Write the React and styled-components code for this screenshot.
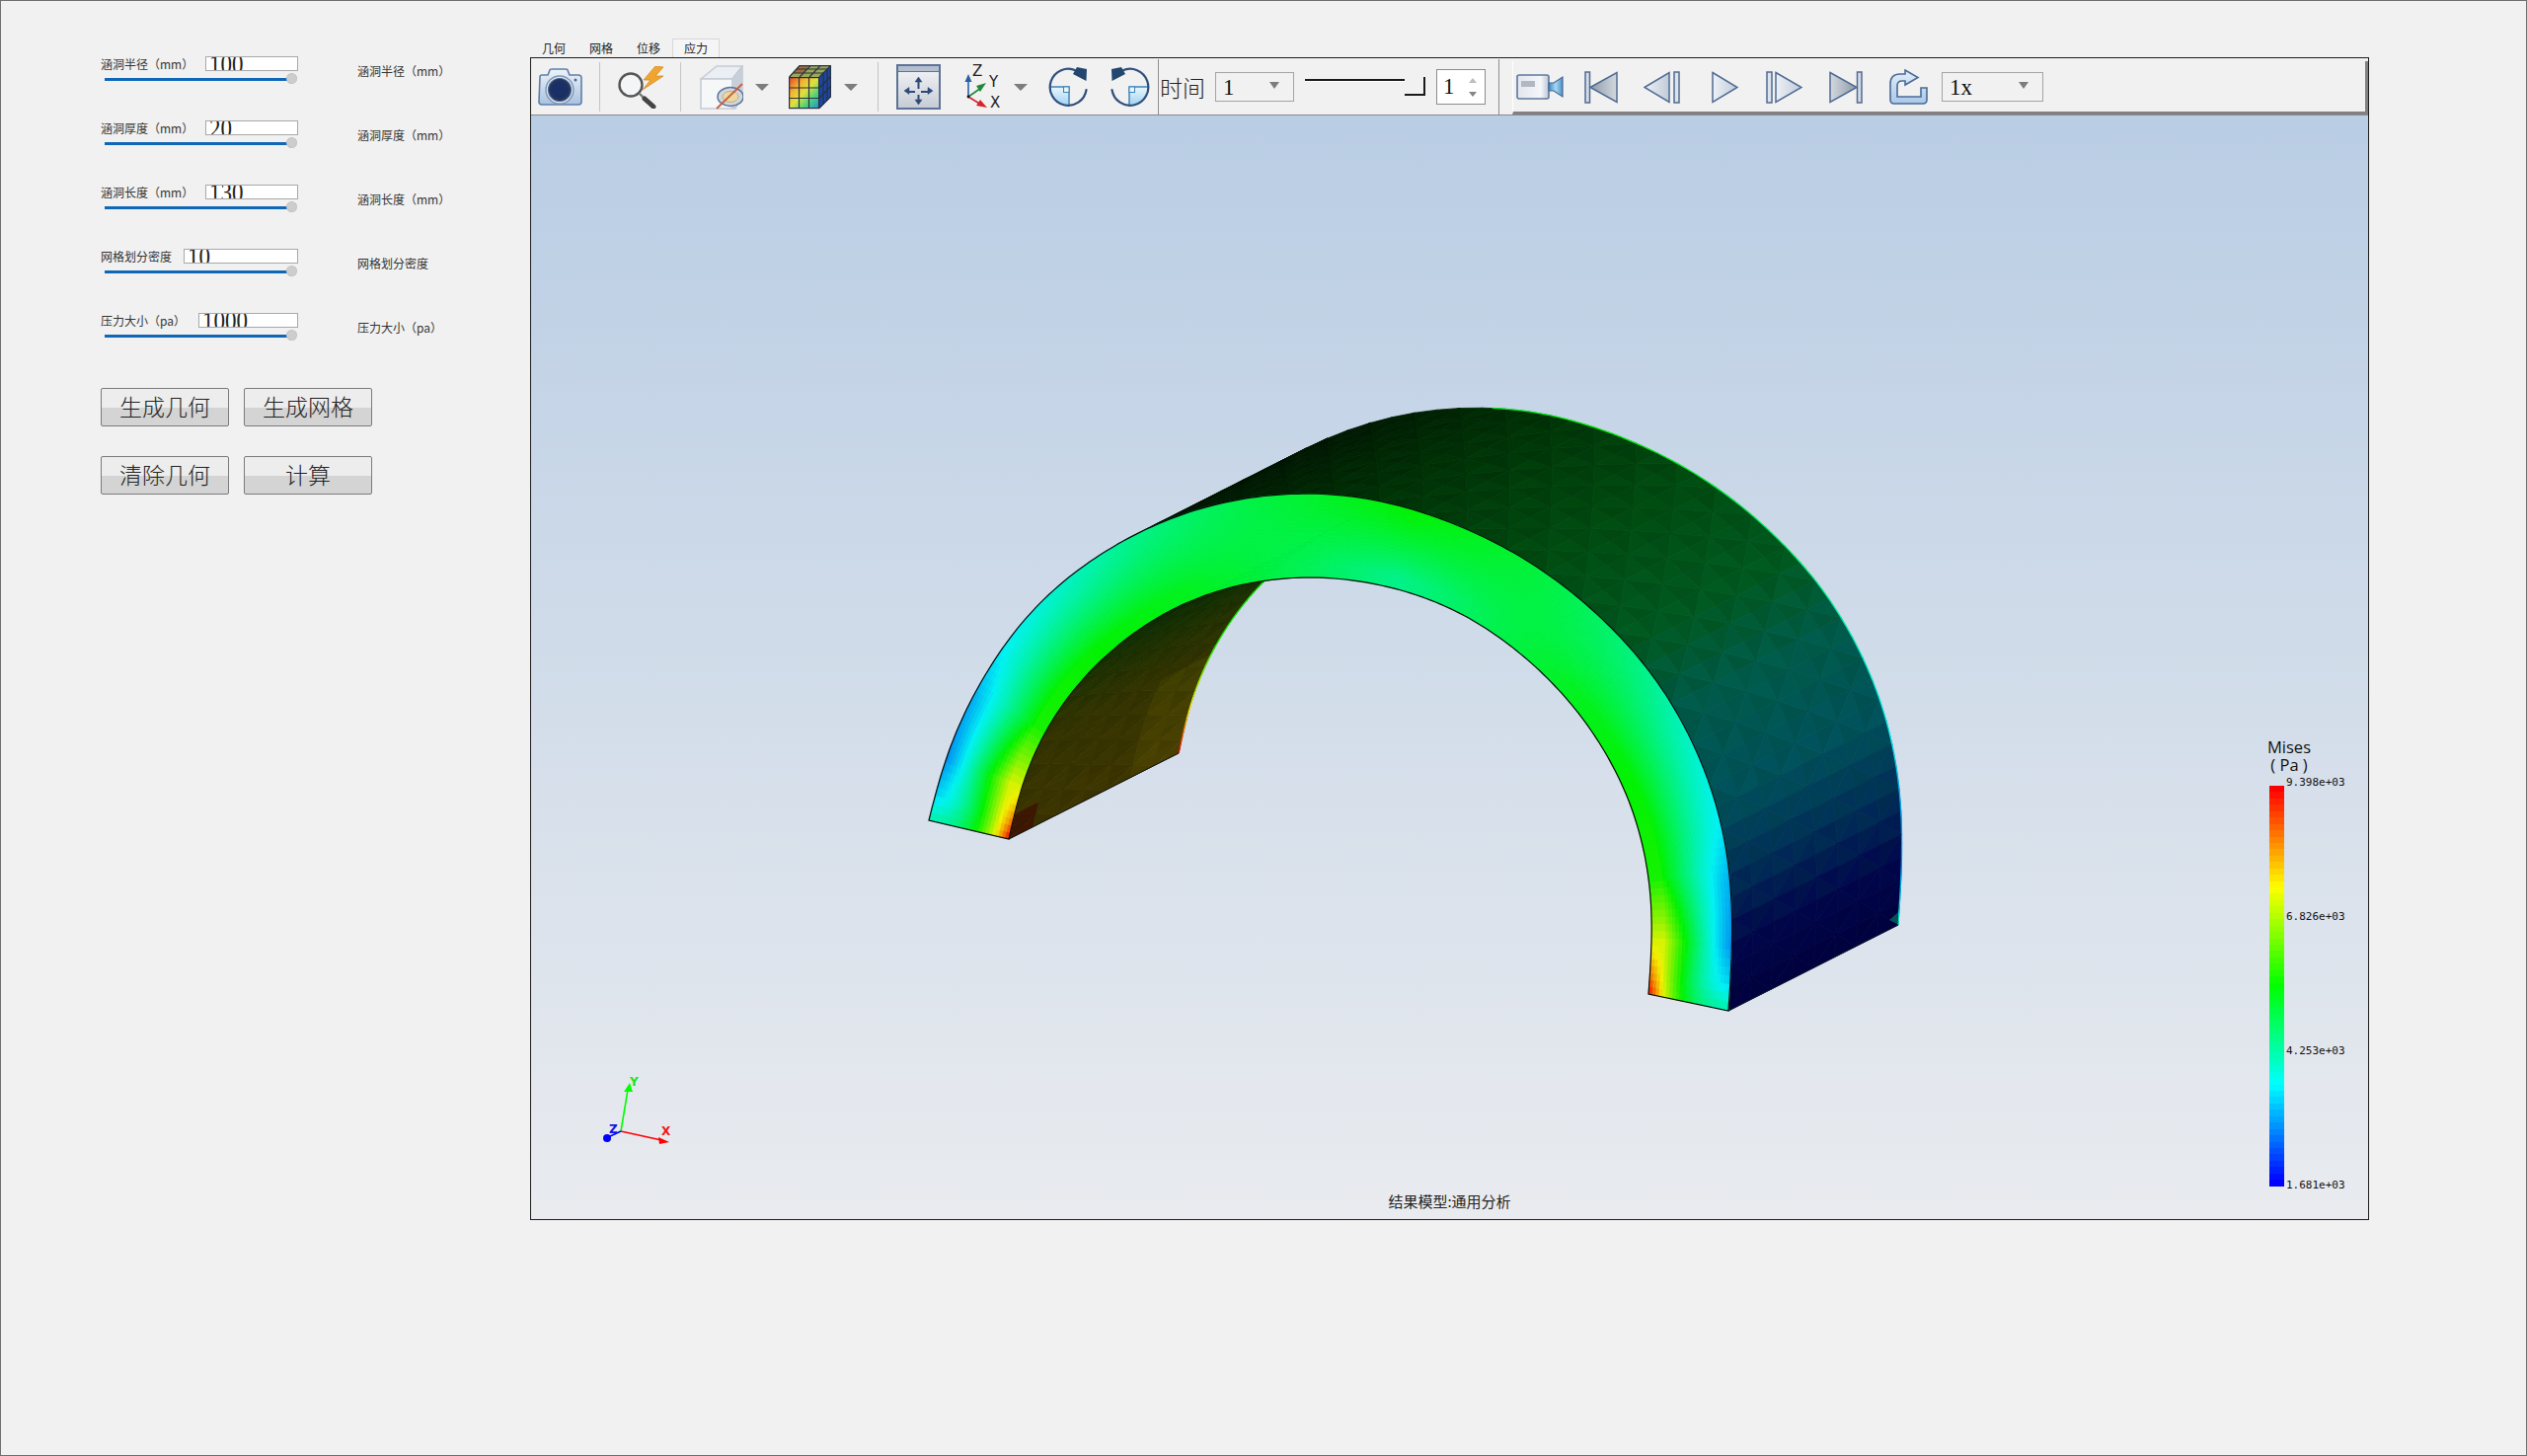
import React from 'react';
import styled, { createGlobalStyle } from 'styled-components';

/* ---------- colour helpers for the result plot ---------- */

const lerp = (a, b, k) => a + (b - a) * k;
const clamp = (v, lo = 0, hi = 1) => Math.min(hi, Math.max(lo, v));

const interp = (keys, x) => {
  if (x <= keys[0][0]) return keys[0][1];
  for (let i = 1; i < keys.length; i++) {
    if (x <= keys[i][0]) {
      const k = (x - keys[i - 1][0]) / (keys[i][0] - keys[i - 1][0]);
      return lerp(keys[i - 1][1], keys[i][1], k);
    }
  }
  return keys[keys.length - 1][1];
};

const rainbow = [
  [0, 0, 255],
  [0, 255, 255],
  [0, 255, 0],
  [255, 255, 0],
  [255, 0, 0],
];

const stressRgb = (v) => {
  const p = clamp(v) * 4;
  const i = Math.min(3, Math.floor(p));
  return rainbow[i].map((c, n) => lerp(c, rainbow[i + 1][n], p - i));
};

const css = (rgb, gain = 1) =>
  `rgb(${rgb.map((c) => Math.round(clamp(c * gain, 0, 255))).join(',')})`;

const rampRgb = (keys, x) => {
  if (x <= keys[0][0]) return keys[0][1];
  for (let i = 1; i < keys.length; i++) {
    if (x <= keys[i][0]) {
      const k = (x - keys[i - 1][0]) / (keys[i][0] - keys[i - 1][0]);
      return keys[i - 1][1].map((c, n) => lerp(c, keys[i][1][n], k));
    }
  }
  return keys[keys.length - 1][1];
};

/* ---------- arch geometry, measured on the reference ---------- */

const OUTER_PTS = [
  [941, 831], [948, 795], [962, 752], [1002, 677], [1053, 610], [1113, 565], [1197, 522], [1273, 505],
  [1320, 502], [1355, 502], [1400, 509], [1471, 533], [1557, 576], [1650, 657], [1707, 739],
  [1743, 829], [1754, 902], [1755, 963], [1751, 1024],
];
const INNER_PTS = [
  [1022, 850], [1030, 810], [1047, 763], [1087, 700], [1140, 650], [1207, 610], [1273, 592],
  [1337, 587], [1400, 596], [1440, 607], [1496, 633], [1579, 702], [1643, 796], [1668, 878],
  [1674, 931], [1670, 1007],
];
const EXTRUDE = [172, -87];
const ARCH_CENTER = [1350, 800];

const spline = (pts) => {
  const out = [];
  for (let i = 0; i < pts.length - 1; i++) {
    const p0 = pts[Math.max(0, i - 1)];
    const p1 = pts[i];
    const p2 = pts[i + 1];
    const p3 = pts[Math.min(pts.length - 1, i + 2)];
    for (let s = 0; s < 12; s++) {
      const t = s / 12;
      const f = (a, b, c, d) =>
        0.5 * (2 * b + (c - a) * t + (2 * a - 5 * b + 4 * c - d) * t * t + (3 * b - a - 3 * c + d) * t * t * t);
      out.push([f(p0[0], p1[0], p2[0], p3[0]), f(p0[1], p1[1], p2[1], p3[1])]);
    }
  }
  out.push(pts[pts.length - 1]);
  return out;
};

const lengths = (pts) => {
  const len = [0];
  for (let i = 1; i < pts.length; i++) {
    len.push(len[i - 1] + Math.hypot(pts[i][0] - pts[i - 1][0], pts[i][1] - pts[i - 1][1]));
  }
  return len;
};

const sampler = (pts) => {
  const len = lengths(pts);
  const total = len[len.length - 1];
  return (t) => {
    const target = clamp(t) * total;
    let i = 1;
    while (i < len.length - 1 && len[i] < target) i++;
    const k = (target - len[i - 1]) / Math.max(0.001, len[i] - len[i - 1]);
    return [lerp(pts[i - 1][0], pts[i][0], k), lerp(pts[i - 1][1], pts[i][1], k)];
  };
};

// the measured points are a bit lumpy, so relax them into one fair curve
const makeCurve = (pts) => {
  const rough = sampler(spline(pts));
  let line = Array.from({ length: 301 }, (_, i) => rough(i / 300));
  for (let pass = 0; pass < 300; pass++) {
    line = line.map((p, i) => {
      if (i === 0 || i === line.length - 1) return p;
      return [
        0.25 * line[i - 1][0] + 0.5 * p[0] + 0.25 * line[i + 1][0],
        0.25 * line[i - 1][1] + 0.5 * p[1] + 0.25 * line[i + 1][1],
      ];
    });
  }
  // relaxing pulls the curve inwards, push it back out
  line = line.map((p, i) => {
    const t = i / 300;
    const dx = p[0] - ARCH_CENTER[0];
    const dy = p[1] - ARCH_CENTER[1];
    const r = Math.hypot(dx, dy);
    const push = 5 * Math.min(1, 5 * t * (1 - t));
    return [p[0] + (dx / r) * push, p[1] + (dy / r) * push];
  });
  return sampler(line);
};

const outerAt = makeCurve(OUTER_PTS);
const innerAt = makeCurve(INNER_PTS);
const shift = (p, u) => [p[0] + EXTRUDE[0] * u, p[1] + EXTRUDE[1] * u];

const OUT_KEYS = [[0, 0.33], [0.02, 0.22], [0.05, 0.15], [0.1, 0.18], [0.14, 0.24], [0.22, 0.3], [0.28, 0.36], [0.36, 0.42], [0.5, 0.5]];
const IN_KEYS = [[0, 1], [0.015, 0.9], [0.04, 0.76], [0.07, 0.65], [0.11, 0.52], [0.2, 0.5], [0.3, 0.47], [0.4, 0.42], [0.5, 0.36]];

const frontValue = (t, s) => {
  const d = Math.min(t, 1 - t);
  const a = interp(OUT_KEYS, d);
  const b = interp(IN_KEYS, d);
  const f = lerp(Math.pow(s, 2.5), Math.pow(Math.min(1, s / 0.85), 1.3), clamp(d / 0.05));
  return a + (b - a) * f;
};

const OUTER_RAMP = [
  [0.26, [0, 16, 0]], [0.36, [0, 28, 2]], [0.445, [0, 44, 4]], [0.6, [0, 74, 16]], [0.7, [0, 88, 32]],
  [0.76, [0, 90, 72]], [0.84, [0, 80, 90]], [0.9, [0, 44, 84]], [0.95, [0, 6, 74]], [1, [0, 0, 60]],
];
const INNER_RAMP = [
  [0, [60, 52, 0]], [0.1, [50, 50, 0]], [0.2, [20, 46, 0]], [0.3, [8, 34, 4]],
];

const quad = (a, b, c, d) => `M${a[0].toFixed(1)} ${a[1].toFixed(1)}L${b[0].toFixed(1)} ${b[1].toFixed(1)}L${c[0].toFixed(1)} ${c[1].toFixed(1)}L${d[0].toFixed(1)} ${d[1].toFixed(1)}Z`;
const tri = (a, b, c) => `M${a[0].toFixed(1)} ${a[1].toFixed(1)}L${b[0].toFixed(1)} ${b[1].toFixed(1)}L${c[0].toFixed(1)} ${c[1].toFixed(1)}Z`;

const noise = (i, j, k) => {
  const x = Math.sin(i * 12.9898 + j * 78.233 + k * 37.719) * 43758.5453;
  return x - Math.floor(x);
};

const buildFront = () => {
  const N = 150;
  const M = 24;
  const list = [];
  for (let i = 0; i < N; i++) {
    const t0 = i / N;
    const t1 = (i + 1) / N;
    const o0 = outerAt(t0);
    const o1 = outerAt(t1);
    const n0 = innerAt(t0);
    const n1 = innerAt(t1);
    for (let j = 0; j < M; j++) {
      const s0 = j / M;
      const s1 = (j + 1) / M;
      const p = (o, n, s) => [lerp(o[0], n[0], s), lerp(o[1], n[1], s)];
      const c = css(stressRgb(frontValue((t0 + t1) / 2, (s0 + s1) / 2)), 0.95);
      list.push({ d: quad(p(o0, n0, s0), p(o1, n1, s0), p(o1, n1, s1), p(o0, n0, s1)), c });
    }
  }
  return list;
};

const buildOuterSkin = () => {
  const start = 0.265;
  const N = 42;
  const M = 8;
  const list = [];
  for (let i = 0; i < N; i++) {
    const t0 = lerp(start, 1, i / N);
    const t1 = lerp(start, 1, (i + 1) / N);
    for (let j = 0; j < M; j++) {
      const u0 = j / M;
      const u1 = (j + 1) / M;
      const a = shift(outerAt(t0), u0);
      const b = shift(outerAt(t1), u0);
      const c = shift(outerAt(t1), u1);
      const d = shift(outerAt(t0), u1);
      const flip = (i + j) % 2 === 0;
      const pair = flip ? [[a, b, c], [a, c, d]] : [[a, b, d], [b, c, d]];
      pair.forEach((pts, k) => {
        const tm = (t0 + t1) / 2 + (k === 0 ? -0.004 : 0.004);
        const gain = 1 + (k === 0 ? -0.03 : 0.03) + (noise(i, j, k) - 0.5) * 0.03;
        list.push({ d: tri(...pts), c: css(rampRgb(OUTER_RAMP, tm), gain) });
      });
    }
  }
  return list;
};

const buildInnerSkin = () => {
  const N = 24;
  const M = 7;
  const list = [];
  for (let i = 0; i < N; i++) {
    const t0 = lerp(0, 0.3, i / N);
    const t1 = lerp(0, 0.3, (i + 1) / N);
    for (let j = 0; j < M; j++) {
      const u0 = j / M;
      const u1 = (j + 1) / M;
      const a = shift(innerAt(t0), u0);
      const b = shift(innerAt(t1), u0);
      const c = shift(innerAt(t1), u1);
      const d = shift(innerAt(t0), u1);
      const flip = (i + j) % 2 === 0;
      const pair = flip ? [[a, b, c], [a, c, d]] : [[a, b, d], [b, c, d]];
      pair.forEach((pts, k) => {
        const tm = (t0 + t1) / 2;
        const um = (u0 + u1) / 2;
        let rgb = rampRgb(INNER_RAMP, tm);
        if (tm < 0.02 && um < 0.15) rgb = [60, 22, 0];
        if (tm < 0.1 && um > 0.75) rgb = rgb.map((v) => v * 1.2);
        const gain = 1 + (k === 0 ? -0.03 : 0.03) + (noise(i, j, k + 3) - 0.5) * 0.05;
        list.push({ d: tri(...pts), c: css(rgb, gain) });
      });
    }
  }
  return list;
};

const outlinePath = () => {
  const pts = [];
  for (let i = 0; i <= 200; i++) pts.push(outerAt(i / 200));
  for (let i = 200; i >= 0; i--) pts.push(innerAt(i / 200));
  return 'M' + pts.map((p) => `${p[0].toFixed(1)} ${p[1].toFixed(1)}`).join('L') + 'Z';
};

const buildEdges = () => {
  const list = [];
  for (let i = 0; i < 90; i++) {
    const t0 = lerp(0.43, 1, i / 90);
    const t1 = lerp(0.43, 1, (i + 1) / 90);
    const v = interp(OUT_KEYS, Math.min(t0, 1 - t0));
    const a = shift(outerAt(t0), 1);
    const b = shift(outerAt(t1), 1);
    list.push({ a, b, c: css(stressRgb(v), 0.95) });
  }
  for (let i = 0; i < 40; i++) {
    const t0 = lerp(0, 0.225, i / 40);
    const t1 = lerp(0, 0.225, (i + 1) / 40);
    const v = interp(IN_KEYS, t0);
    list.push({ a: shift(innerAt(t0), 1), b: shift(innerAt(t1), 1), c: css(stressRgb(v), 0.95) });
  }
  return list;
};

const FRONT = buildFront();
const OUTER_SKIN = buildOuterSkin();
const INNER_SKIN = buildInnerSkin();
const OUTLINE = outlinePath();
const EDGES = buildEdges();

const LEGEND_BANDS = Array.from({ length: 63 }, (_, i) => css(stressRgb(1 - i / 62)));

/* ---------- drawing components ---------- */

const ArchPlot = () => (
  <PlotSvg viewBox="538 117 1861 1118">
    {OUTER_SKIN.map((p, i) => <path key={i} d={p.d} fill={p.c} stroke={p.c} strokeWidth="0.8" />)}
    <polygon points="1922,936 1923,924 1914,932" fill="#06505a" />
    {INNER_SKIN.map((p, i) => <path key={i} d={p.d} fill={p.c} stroke={p.c} strokeWidth="0.8" />)}
    {EDGES.map((e, i) => (
      <line key={i} x1={e.a[0]} y1={e.a[1]} x2={e.b[0]} y2={e.b[1]} stroke={e.c} strokeWidth="1.3" />
    ))}
    <line x1="1022" y1="850" x2="1194" y2="763" stroke="#111" strokeWidth="1" />
    <line x1="1751" y1="1024" x2="1923" y2="937" stroke="#0a1a30" strokeWidth="1" />
    {FRONT.map((p, i) => <path key={i} d={p.d} fill={p.c} stroke={p.c} strokeWidth="0.7" />)}
    <path d={OUTLINE} fill="none" stroke="#0b0b0b" strokeWidth="1.2" />

    <g fontFamily="'DejaVu Sans', sans-serif" fontSize="12" fontWeight="700">
      <line x1="629" y1="1146" x2="636" y2="1104" stroke="#00ff00" strokeWidth="1.6" />
      <polygon points="638,1097 632,1106 641,1106" fill="#00ff00" />
      <text x="638" y="1100" fill="#19e619">Y</text>
      <line x1="629" y1="1146" x2="670" y2="1155" stroke="#ff0000" strokeWidth="1.6" />
      <polygon points="678,1157 667,1152 668,1159" fill="#ff0000" />
      <text x="670" y="1150" fill="#f01818">X</text>
      <line x1="629" y1="1146" x2="616" y2="1152" stroke="#0000ff" strokeWidth="1.6" />
      <circle cx="615" cy="1153" r="4" fill="#0000ff" />
      <text x="617" y="1148" fill="#1414e6">Z</text>
    </g>
  </PlotSvg>
);

const CameraIcon = () => (
  <svg width="45" height="38" viewBox="0 0 45 38">
    <defs>
      <linearGradient id="camBody" x1="0" y1="0" x2="0" y2="1">
        <stop offset="0" stopColor="#eef3f9" />
        <stop offset="1" stopColor="#a9c2e0" />
      </linearGradient>
    </defs>
    <path d="M2 9Q2 7 4 7L10 7L12 2Q12 1 14 1L28 1Q30 1 30 2L32 7L41 7Q44 7 44 10L44 34Q44 37 41 37L4 37Q1 37 1 34Z" fill="url(#camBody)" stroke="#5f7fa8" strokeWidth="1.6" />
    <circle cx="22" cy="22" r="14" fill="#dfe8f3" stroke="#7d96b8" strokeWidth="1.4" />
    <circle cx="22" cy="22" r="11.5" fill="#22355f" stroke="#51688c" strokeWidth="1.2" />
    <circle cx="22" cy="22" r="8.5" fill="#1a2f66" />
    <circle cx="38" cy="12" r="1.5" fill="#4d6a94" />
  </svg>
);

const SearchBoltIcon = () => (
  <svg width="47" height="43" viewBox="0 0 47 43">
    <circle cx="13" cy="19" r="11.5" fill="#f3f5f7" stroke="#555" strokeWidth="2.4" />
    <line x1="22" y1="28" x2="27" y2="33" stroke="#777" strokeWidth="2.4" />
    <line x1="27" y1="33" x2="36" y2="41" stroke="#444" strokeWidth="5" strokeLinecap="round" />
    <path d="M38 0L26 14L33 14L25 24L46 10L38 10L46 1Z" fill="#f2a52e" stroke="#d08a28" strokeWidth="0.8" />
  </svg>
);

const CubeIcon = () => (
  <svg width="44" height="45" viewBox="0 0 44 45">
    <polygon points="1,14 17,1 43,1 33,14" fill="#ebeef3" stroke="#c5ccd6" strokeWidth="1.6" />
    <polygon points="33,14 43,1 43,31 36,44 33,44" fill="#c9cfd8" stroke="#c5ccd6" strokeWidth="1.6" />
    <polygon points="1,14 33,14 33,44 1,44" fill="#f6f7f9" stroke="#c5ccd6" strokeWidth="1.6" />
    <ellipse cx="31" cy="32" rx="13" ry="9.5" fill="#cfd6e0" stroke="#5f7598" strokeWidth="1.5" />
    <ellipse cx="31" cy="32" rx="8" ry="5.5" fill="#ecd9a2" stroke="#b9a468" strokeWidth="0.8" />
    <line x1="43" y1="19" x2="17" y2="44" stroke="#c8603a" strokeWidth="1.8" />
  </svg>
);

const RubikIcon = () => (
  <svg width="43" height="45" viewBox="0 0 43 45">
    <defs>
      <linearGradient id="heatFace" x1="0" y1="0" x2="1" y2="1">
        <stop offset="0" stopColor="#e0402c" />
        <stop offset="0.3" stopColor="#f3b431" />
        <stop offset="0.5" stopColor="#dfe23c" />
        <stop offset="0.72" stopColor="#4fd27a" />
        <stop offset="1" stopColor="#1f8ae0" />
      </linearGradient>
    </defs>
    <polygon points="0,12 11,0 43,0 31,12" fill="#9aa85a" />
    <polygon points="0,12 4,8 14,8 21,0 11,0" fill="#a36a3e" />
    <polygon points="31,12 43,0 43,32 31,44" fill="#1c47a6" />
    <rect x="0" y="12" width="31" height="32" fill="url(#heatFace)" />
    <g stroke="#27313f" strokeWidth="1.2" fill="none">
      <rect x="0.6" y="12.6" width="30" height="31" />
      <path d="M10.5 12V44M20.5 12V44M0 23H31M0 33.5H31" />
      <path d="M0.6 12L11 0.6H42.4L31 12M42.4 0.6V32L31 43.6" />
      <path d="M11 12L22 0.6M21 12L32 0.6M4.5 8H36M8 4H39" />
      <path d="M35 8V40M39 4V36M31 23L43 11M31 33.5L43 21" />
    </g>
  </svg>
);

const FitIcon = () => (
  <svg width="45" height="46" viewBox="0 0 45 46">
    <defs>
      <linearGradient id="fitFill" x1="0" y1="0" x2="0" y2="1">
        <stop offset="0" stopColor="#f5f6f8" />
        <stop offset="1" stopColor="#c6cbd4" />
      </linearGradient>
    </defs>
    <rect x="1" y="1" width="43" height="44" fill="url(#fitFill)" stroke="#5d7296" strokeWidth="2" />
    <rect x="2" y="2" width="41" height="5" fill="#b3bfd0" />
    <line x1="2" y1="7.5" x2="43" y2="7.5" stroke="#5d7296" strokeWidth="1.2" />
    <g stroke="#2d4a78" strokeWidth="2" fill="#2d4a78">
      <path d="M22.5 17V39M11 28H34" fill="none" strokeDasharray="8 6" />
      <polygon points="22.5,13 19,18 26,18" strokeWidth="0.5" />
      <polygon points="22.5,41 19,36 26,36" strokeWidth="0.5" />
      <polygon points="8,27 13,23.5 13,30.5" strokeWidth="0.5" />
      <polygon points="37,27 32,23.5 32,30.5" strokeWidth="0.5" />
    </g>
  </svg>
);

const AxesIcon = () => (
  <svg width="38" height="46" viewBox="0 0 38 46">
    <g fontFamily="'DejaVu Sans', sans-serif" fontSize="15" fill="#222">
      <text x="8" y="12">Z</text>
      <text x="25" y="23">Y</text>
      <text x="26" y="44">X</text>
    </g>
    <line x1="4" y1="33" x2="4" y2="17" stroke="#2a5fa8" strokeWidth="1.6" />
    <polygon points="4,10 0.5,18 7.5,18" fill="#2a5fa8" />
    <line x1="4" y1="33" x2="17" y2="24" stroke="#1f8a3a" strokeWidth="1.6" />
    <polygon points="22,19 12,22 16,28" fill="#1f8a3a" />
    <line x1="4" y1="33" x2="17" y2="41" stroke="#d8232a" strokeWidth="1.6" />
    <polygon points="23,44 12,42 16,36" fill="#d8232a" />
    <circle cx="4" cy="33" r="1.4" fill="#111" />
  </svg>
);

const RotateIcon = ({ $mirror }) => {
  const id = $mirror ? 'rotFillB' : 'rotFillA';
  return (
    <svg width="40" height="42" viewBox="0 0 40 42">
      <defs>
        <linearGradient id={id} x1="0" y1="0" x2="0" y2="1">
          <stop offset="0" stopColor="#eaf6fd" />
          <stop offset="1" stopColor="#9fd4f3" />
        </linearGradient>
      </defs>
      <g transform={$mirror ? 'translate(40 0) scale(-1 1)' : undefined}>
        <path d="M1.5 21L20.5 21L20.5 39.5A18.5 18.5 0 0 1 1.5 21Z" fill={`url(#${id})`} />
        <path d="M1.5 21H21V39" fill="none" stroke="#3f82b8" strokeWidth="1.5" />
        <rect x="15.5" y="21" width="5.5" height="5.5" fill="#eaf6fd" stroke="#3f82b8" strokeWidth="1" />
        <path d="M38.5 24A18.5 18.5 0 1 1 28 4.5" fill="none" stroke="#2f4f7c" strokeWidth="2.2" strokeLinecap="round" />
        <polygon points="29,1 39,3 38.5,15 25,8" fill="#23466f" />
      </g>
    </svg>
  );
};

const VideoIcon = () => (
  <svg width="49" height="26" viewBox="0 0 49 26">
    <defs>
      <linearGradient id="vidBody" x1="0" y1="0" x2="1" y2="0">
        <stop offset="0" stopColor="#e2e6ed" />
        <stop offset="0.75" stopColor="#f4f6f9" />
        <stop offset="1" stopColor="#bcc6d4" />
      </linearGradient>
      <linearGradient id="vidLens" x1="0" y1="0" x2="1" y2="0">
        <stop offset="0" stopColor="#3f86c4" />
        <stop offset="0.5" stopColor="#a8d8f4" />
        <stop offset="1" stopColor="#4d8fc7" />
      </linearGradient>
    </defs>
    <rect x="1" y="1" width="32" height="24" rx="2" fill="url(#vidBody)" stroke="#5d789e" strokeWidth="1.6" />
    <rect x="5" y="7" width="14" height="6" fill="#b2b8c2" />
    <polygon points="33,9 38,9 47,3 47,23 38,17 33,17" fill="url(#vidLens)" stroke="#466a96" strokeWidth="1.2" />
  </svg>
);

const NavDefs = () => (
  <svg width="0" height="0" style={{ position: 'absolute' }}>
    <defs>
      <linearGradient id="navDark" x1="0" y1="0" x2="1" y2="0">
        <stop offset="0" stopColor="#8d99a9" />
        <stop offset="1" stopColor="#d4d9df" />
      </linearGradient>
      <linearGradient id="navDarkRev" x1="0" y1="0" x2="1" y2="0">
        <stop offset="0" stopColor="#d4d9df" />
        <stop offset="1" stopColor="#8d99a9" />
      </linearGradient>
      <linearGradient id="navLight" x1="0" y1="0" x2="1" y2="0">
        <stop offset="0" stopColor="#eef1f6" />
        <stop offset="1" stopColor="#c0cbd9" />
      </linearGradient>
      <linearGradient id="exportFill" x1="0" y1="0" x2="0" y2="1">
        <stop offset="0" stopColor="#e3eef9" />
        <stop offset="1" stopColor="#a9c8e8" />
      </linearGradient>
    </defs>
  </svg>
);

const FirstIcon = () => (
  <svg width="34" height="33" viewBox="0 0 34 33">
    <rect x="1" y="1" width="4.5" height="31" fill="#d4dbe5" stroke="#4f6b92" strokeWidth="1.5" />
    <polygon points="6,16.5 33,1.5 33,31.5" fill="url(#navDark)" stroke="#4f6b92" strokeWidth="1.5" />
  </svg>
);

const BackIcon = () => (
  <svg width="37" height="33" viewBox="0 0 37 33">
    <polygon points="1,16.5 26,1.5 26,31.5" fill="url(#navLight)" stroke="#4f6b92" strokeWidth="1.5" />
    <rect x="31" y="1" width="5" height="31" fill="#dde3eb" stroke="#4f6b92" strokeWidth="1.5" />
  </svg>
);

const PlayIcon = () => (
  <svg width="27" height="33" viewBox="0 0 27 33">
    <polygon points="1,1.5 26,16.5 1,31.5" fill="url(#navLight)" stroke="#4f6b92" strokeWidth="1.5" />
  </svg>
);

const ForwardIcon = () => (
  <svg width="37" height="33" viewBox="0 0 37 33">
    <rect x="1" y="1" width="5" height="31" fill="#dde3eb" stroke="#4f6b92" strokeWidth="1.5" />
    <polygon points="10,1.5 36,16.5 10,31.5" fill="url(#navLight)" stroke="#4f6b92" strokeWidth="1.5" />
  </svg>
);

const LastIcon = () => (
  <svg width="34" height="33" viewBox="0 0 34 33">
    <polygon points="1,1.5 28,16.5 1,31.5" fill="url(#navDarkRev)" stroke="#4f6b92" strokeWidth="1.5" />
    <rect x="28.5" y="1" width="4.5" height="31" fill="#d4dbe5" stroke="#4f6b92" strokeWidth="1.5" />
  </svg>
);

const ExportIcon = () => (
  <svg width="39" height="36" viewBox="0 0 39 36">
    <path
      d="M1 15Q1 5 11 5L16 5L16 1L29 8.5L16 16L16 12L13 12Q8 12 8 17L8 28L32 28L32 19L38 19L38 31Q38 35 34 35L5 35Q1 35 1 31Z"
      fill="url(#exportFill)"
      stroke="#4a6b97"
      strokeWidth="1.6"
    />
  </svg>
);

/* ---------- page ---------- */

const GlobalStyle = createGlobalStyle`
  html, body {
    margin: 0;
    padding: 0;
    background: #f1f1f1;
    overflow: hidden;
  }
  * { box-sizing: border-box; }
`;

const CJK = `"Noto Sans CJK SC", "Liberation Sans", sans-serif`;
const SERIF = `"Liberation Serif", "Noto Sans CJK SC", serif`;

const Page = styled.div`
  width: 2560px;
  height: 1475px;
  display: flex;
  background: #f1f1f1;
  border: 1px solid #6e6e6e;
  overflow: hidden;
`;

const Sidebar = styled.aside`
  width: 536px;
  flex: none;
  padding: 56px 0 0 101px;
`;

const ParamRow = styled.div`
  display: flex;
  height: 65px;
`;

const ParamControl = styled.div`
  width: 200px;
`;

const ParamTop = styled.div`
  display: flex;
  justify-content: space-between;
  height: 15px;
`;

const ParamLabel = styled.span`
  font: 12px/15px ${CJK};
  color: #333;
  white-space: nowrap;
`;

const ParamEcho = styled(ParamLabel)`
  margin: 7px 0 0 60px;
`;

const ValueBox = styled.div`
  width: ${(p) => p.$width}px;
  height: 15px;
  background: #fff;
  border: 1px solid #a8a8a8;
  padding-left: 3px;
  overflow: hidden;
`;

const ValueText = styled.div`
  font: 23px/13px ${SERIF};
  color: #222;
  transform: translateY(1px) scaleY(1.15);
`;

const SliderTrack = styled.div`
  position: relative;
  width: 194px;
  height: 10px;
  margin: 3px 0 0 4px;
  display: flex;
  align-items: center;
`;

const SliderFill = styled.div`
  width: 189px;
  height: 3px;
  background: #0f67b8;
`;

const SliderKnob = styled.div`
  position: absolute;
  right: -1px;
  top: -1px;
  width: 11px;
  height: 11px;
  border-radius: 50%;
  background: #cdcdcd;
  border: 1px dotted #b5b5b5;
`;

const ActionGrid = styled.div`
  display: grid;
  grid-template-columns: 130px 130px;
  gap: 30px 15px;
  margin-top: 11px;
`;

const ActionButton = styled.button`
  height: 39px;
  padding: 0 0 2px;
  border: 1px solid #7b7b7b;
  border-radius: 2px;
  background: linear-gradient(#ededed 52%, #d4d4d4 52%);
  font: 300 23px/35px ${CJK};
  color: #222;
`;

const Main = styled.main`
  display: flex;
  flex-direction: column;
  padding-top: 38px;
`;

const Tabs = styled.div`
  display: flex;
  height: 19px;
`;

const Tab = styled.div`
  width: 48px;
  text-align: center;
  font: 12px/19px ${CJK};
  color: #222;
  background: ${(p) => (p.$active ? '#f5f5f5' : 'transparent')};
  box-shadow: ${(p) => (p.$active ? 'inset 1px 1px 0 #d8d8d8, inset -1px 0 0 #d8d8d8' : 'none')};
`;

const Panel = styled.section`
  width: 1863px;
  height: 1178px;
  border: 1px solid #1d1d1d;
  display: flex;
  flex-direction: column;
`;

const Toolbar = styled.div`
  height: 58px;
  flex: none;
  display: flex;
  align-items: center;
  padding: 1px 0 0 7px;
  background: #f1f1f1;
  border-bottom: 1px solid #8a8a8a;
`;

const Tool = styled.div`
  display: flex;
  flex: none;
  margin-left: ${(p) => p.$ml || 0}px;
`;

const Divider = styled.div`
  width: 1px;
  flex: none;
  align-self: ${(p) => (p.$strong ? 'stretch' : 'center')};
  height: ${(p) => (p.$strong ? 'auto' : '50px')};
  margin-left: ${(p) => p.$ml}px;
  background: ${(p) => (p.$strong ? '#8f8f8f' : '#c4c4c4')};
`;

const Caret = styled.div`
  flex: none;
  margin-left: ${(p) => p.$ml}px;
  width: 0;
  height: 0;
  border-left: 7px solid transparent;
  border-right: 7px solid transparent;
  border-top: 7px solid #7d7d7d;
`;

const TimeLabel = styled.span`
  margin-left: 1px;
  width: 46px;
  flex: none;
  font: 300 23px/30px ${CJK};
  color: #222;
`;

const ComboBox = styled.div`
  flex: none;
  display: flex;
  align-items: center;
  justify-content: space-between;
  width: ${(p) => p.$width}px;
  height: 30px;
  margin-left: ${(p) => p.$ml}px;
  padding: 0 ${(p) => p.$pr}px 4px 7px;
  border: 1px solid #a4a4a4;
  font: 23px/28px ${SERIF};
  color: #111;
`;

const ComboText = styled.span`
  position: relative;
  top: 3px;
`;

const ComboCaret = styled.div`
  border-left: 5.5px solid transparent;
  border-right: 5.5px solid transparent;
  border-top: 7px solid #7d7d7d;
`;

const RangeLine = styled.div`
  flex: none;
  display: flex;
  align-items: flex-start;
  width: 122px;
  height: 19px;
  margin: -1px 0 0 11px;
`;

const RangeTrack = styled.div`
  width: 101px;
  height: 2px;
  margin-top: 2px;
  background: #1a1a1a;
  box-shadow: 0 1px 0 #fff;
`;

const RangeEnd = styled.div`
  width: 21px;
  height: 19px;
  border-right: 2px solid #1a1a1a;
  border-bottom: 2px solid #1a1a1a;
`;

const SpinBox = styled.div`
  flex: none;
  display: flex;
  align-items: center;
  justify-content: space-between;
  width: 50px;
  height: 36px;
  margin-left: 11px;
  padding: 0 8px 0 6px;
  background: #fff;
  border: 1px solid #8c8c8c;
  font: 23px/34px ${SERIF};
  color: #111;
`;

const SpinArrows = styled.div`
  display: flex;
  flex-direction: column;
  gap: 9px;
`;

const SpinArrow = styled.div`
  border-left: 4.5px solid transparent;
  border-right: 4.5px solid transparent;
  ${(p) => (p.$up ? 'border-bottom: 5px solid #bdbdbd;' : 'border-top: 5px solid #858585;')}
`;

const PlaybackBar = styled.div`
  flex: 1;
  align-self: flex-end;
  height: 54px;
  margin-left: 13px;
  padding-top: 1px;
  display: flex;
  align-items: center;
  border-left: 1px solid #fff;
  border-bottom: 3px solid #808080;
  border-right: 3px solid #808080;
`;

const Viewport = styled.div`
  position: relative;
  flex: 1;
  background: linear-gradient(#b9cde4, #e9ebef);
  overflow: hidden;
`;

const PlotSvg = styled.svg`
  position: absolute;
  inset: 0;
  width: 100%;
  height: 100%;
`;

const Caption = styled.div`
  position: absolute;
  left: 0;
  right: 0;
  bottom: 9px;
  text-align: center;
  font: 15px/18px ${CJK};
  color: #222;
`;

const Legend = styled.div`
  position: absolute;
  left: 1750px;
  top: 631px;
  width: 100px;
`;

const LegendTitle = styled.div`
  width: 62px;
  text-align: center;
  font: 16.5px/18px "Open Sans", ${CJK};
  color: #111;
  white-space: pre;
`;

const LegendBody = styled.div`
  display: flex;
  margin-top: 2px;
`;

const ColorBar = styled.div`
  flex: none;
  width: 15px;
  height: 406px;
  margin: 10px 0 0 11px;
  display: flex;
  flex-direction: column;
`;

const ColorBand = styled.div`
  flex: 1;
`;

const LegendScale = styled.div`
  flex: none;
  height: 422px;
  margin-left: 2px;
  display: flex;
  flex-direction: column;
  justify-content: space-between;
`;

const ScaleValue = styled.span`
  font: 11px/14px "DejaVu Sans Mono", monospace;
  color: #111;
`;

const PARAMS = [
  { label: '涵洞半径（mm）', value: '100', width: 94 },
  { label: '涵洞厚度（mm）', value: '20', width: 94 },
  { label: '涵洞长度（mm）', value: '130', width: 94 },
  { label: '网格划分密度', value: '10', width: 116 },
  { label: '压力大小（pa）', value: '1000', width: 101 },
];

const ACTIONS = ['生成几何', '生成网格', '清除几何', '计算'];
const TABS = ['几何', '网格', '位移', '应力'];
const SCALE = ['9.398e+03', '6.826e+03', '4.253e+03', '1.681e+03'];

const App = () => (
  <Page>
    <GlobalStyle />
    <NavDefs />
    <Sidebar>
      {PARAMS.map((p) => (
        <ParamRow key={p.label}>
          <ParamControl>
            <ParamTop>
              <ParamLabel>{p.label}</ParamLabel>
              <ValueBox $width={p.width}><ValueText>{p.value}</ValueText></ValueBox>
            </ParamTop>
            <SliderTrack>
              <SliderFill />
              <SliderKnob />
            </SliderTrack>
          </ParamControl>
          <ParamEcho>{p.label}</ParamEcho>
        </ParamRow>
      ))}
      <ActionGrid>
        {ACTIONS.map((a) => <ActionButton key={a}>{a}</ActionButton>)}
      </ActionGrid>
    </Sidebar>

    <Main>
      <Tabs>
        {TABS.map((t) => <Tab key={t} $active={t === '应力'}>{t}</Tab>)}
      </Tabs>
      <Panel>
        <Toolbar>
          <Tool><CameraIcon /></Tool>
          <Divider $ml={17} />
          <Tool $ml={18}><SearchBoltIcon /></Tool>
          <Divider $ml={16} />
          <Tool $ml={19}><CubeIcon /></Tool>
          <Caret $ml={12} />
          <Tool $ml={20}><RubikIcon /></Tool>
          <Caret $ml={13} />
          <Divider $ml={20} />
          <Tool $ml={18}><FitIcon /></Tool>
          <Tool $ml={24}><AxesIcon /></Tool>
          <Caret $ml={12} />
          <Tool $ml={21}><RotateIcon /></Tool>
          <Tool $ml={23}><RotateIcon $mirror /></Tool>
          <Divider $strong $ml={8} />
          <TimeLabel>时间</TimeLabel>
          <ComboBox $width={80} $ml={10} $pr={14}><ComboText>1</ComboText><ComboCaret /></ComboBox>
          <RangeLine>
            <RangeTrack />
            <RangeEnd />
          </RangeLine>
          <SpinBox>
            1
            <SpinArrows>
              <SpinArrow $up />
              <SpinArrow />
            </SpinArrows>
          </SpinBox>
          <Divider $strong $ml={13} />
          <PlaybackBar>
            <Tool $ml={3}><VideoIcon /></Tool>
            <Tool $ml={20}><FirstIcon /></Tool>
            <Tool $ml={26}><BackIcon /></Tool>
            <Tool $ml={32}><PlayIcon /></Tool>
            <Tool $ml={28}><ForwardIcon /></Tool>
            <Tool $ml={27}><LastIcon /></Tool>
            <Tool $ml={27}><ExportIcon /></Tool>
            <ComboBox $width={103} $ml={14} $pr={14}><ComboText>1x</ComboText><ComboCaret /></ComboBox>
          </PlaybackBar>
        </Toolbar>
        <Viewport>
          <ArchPlot />
          <Legend>
            <LegendTitle>{'Mises\n( Pa )'}</LegendTitle>
            <LegendBody>
              <ColorBar>
                {LEGEND_BANDS.map((c, i) => <ColorBand key={i} style={{ background: c }} />)}
              </ColorBar>
              <LegendScale>
                {SCALE.map((s) => <ScaleValue key={s}>{s}</ScaleValue>)}
              </LegendScale>
            </LegendBody>
          </Legend>
          <Caption>结果模型:通用分析</Caption>
        </Viewport>
      </Panel>
    </Main>
  </Page>
);

export default App;
